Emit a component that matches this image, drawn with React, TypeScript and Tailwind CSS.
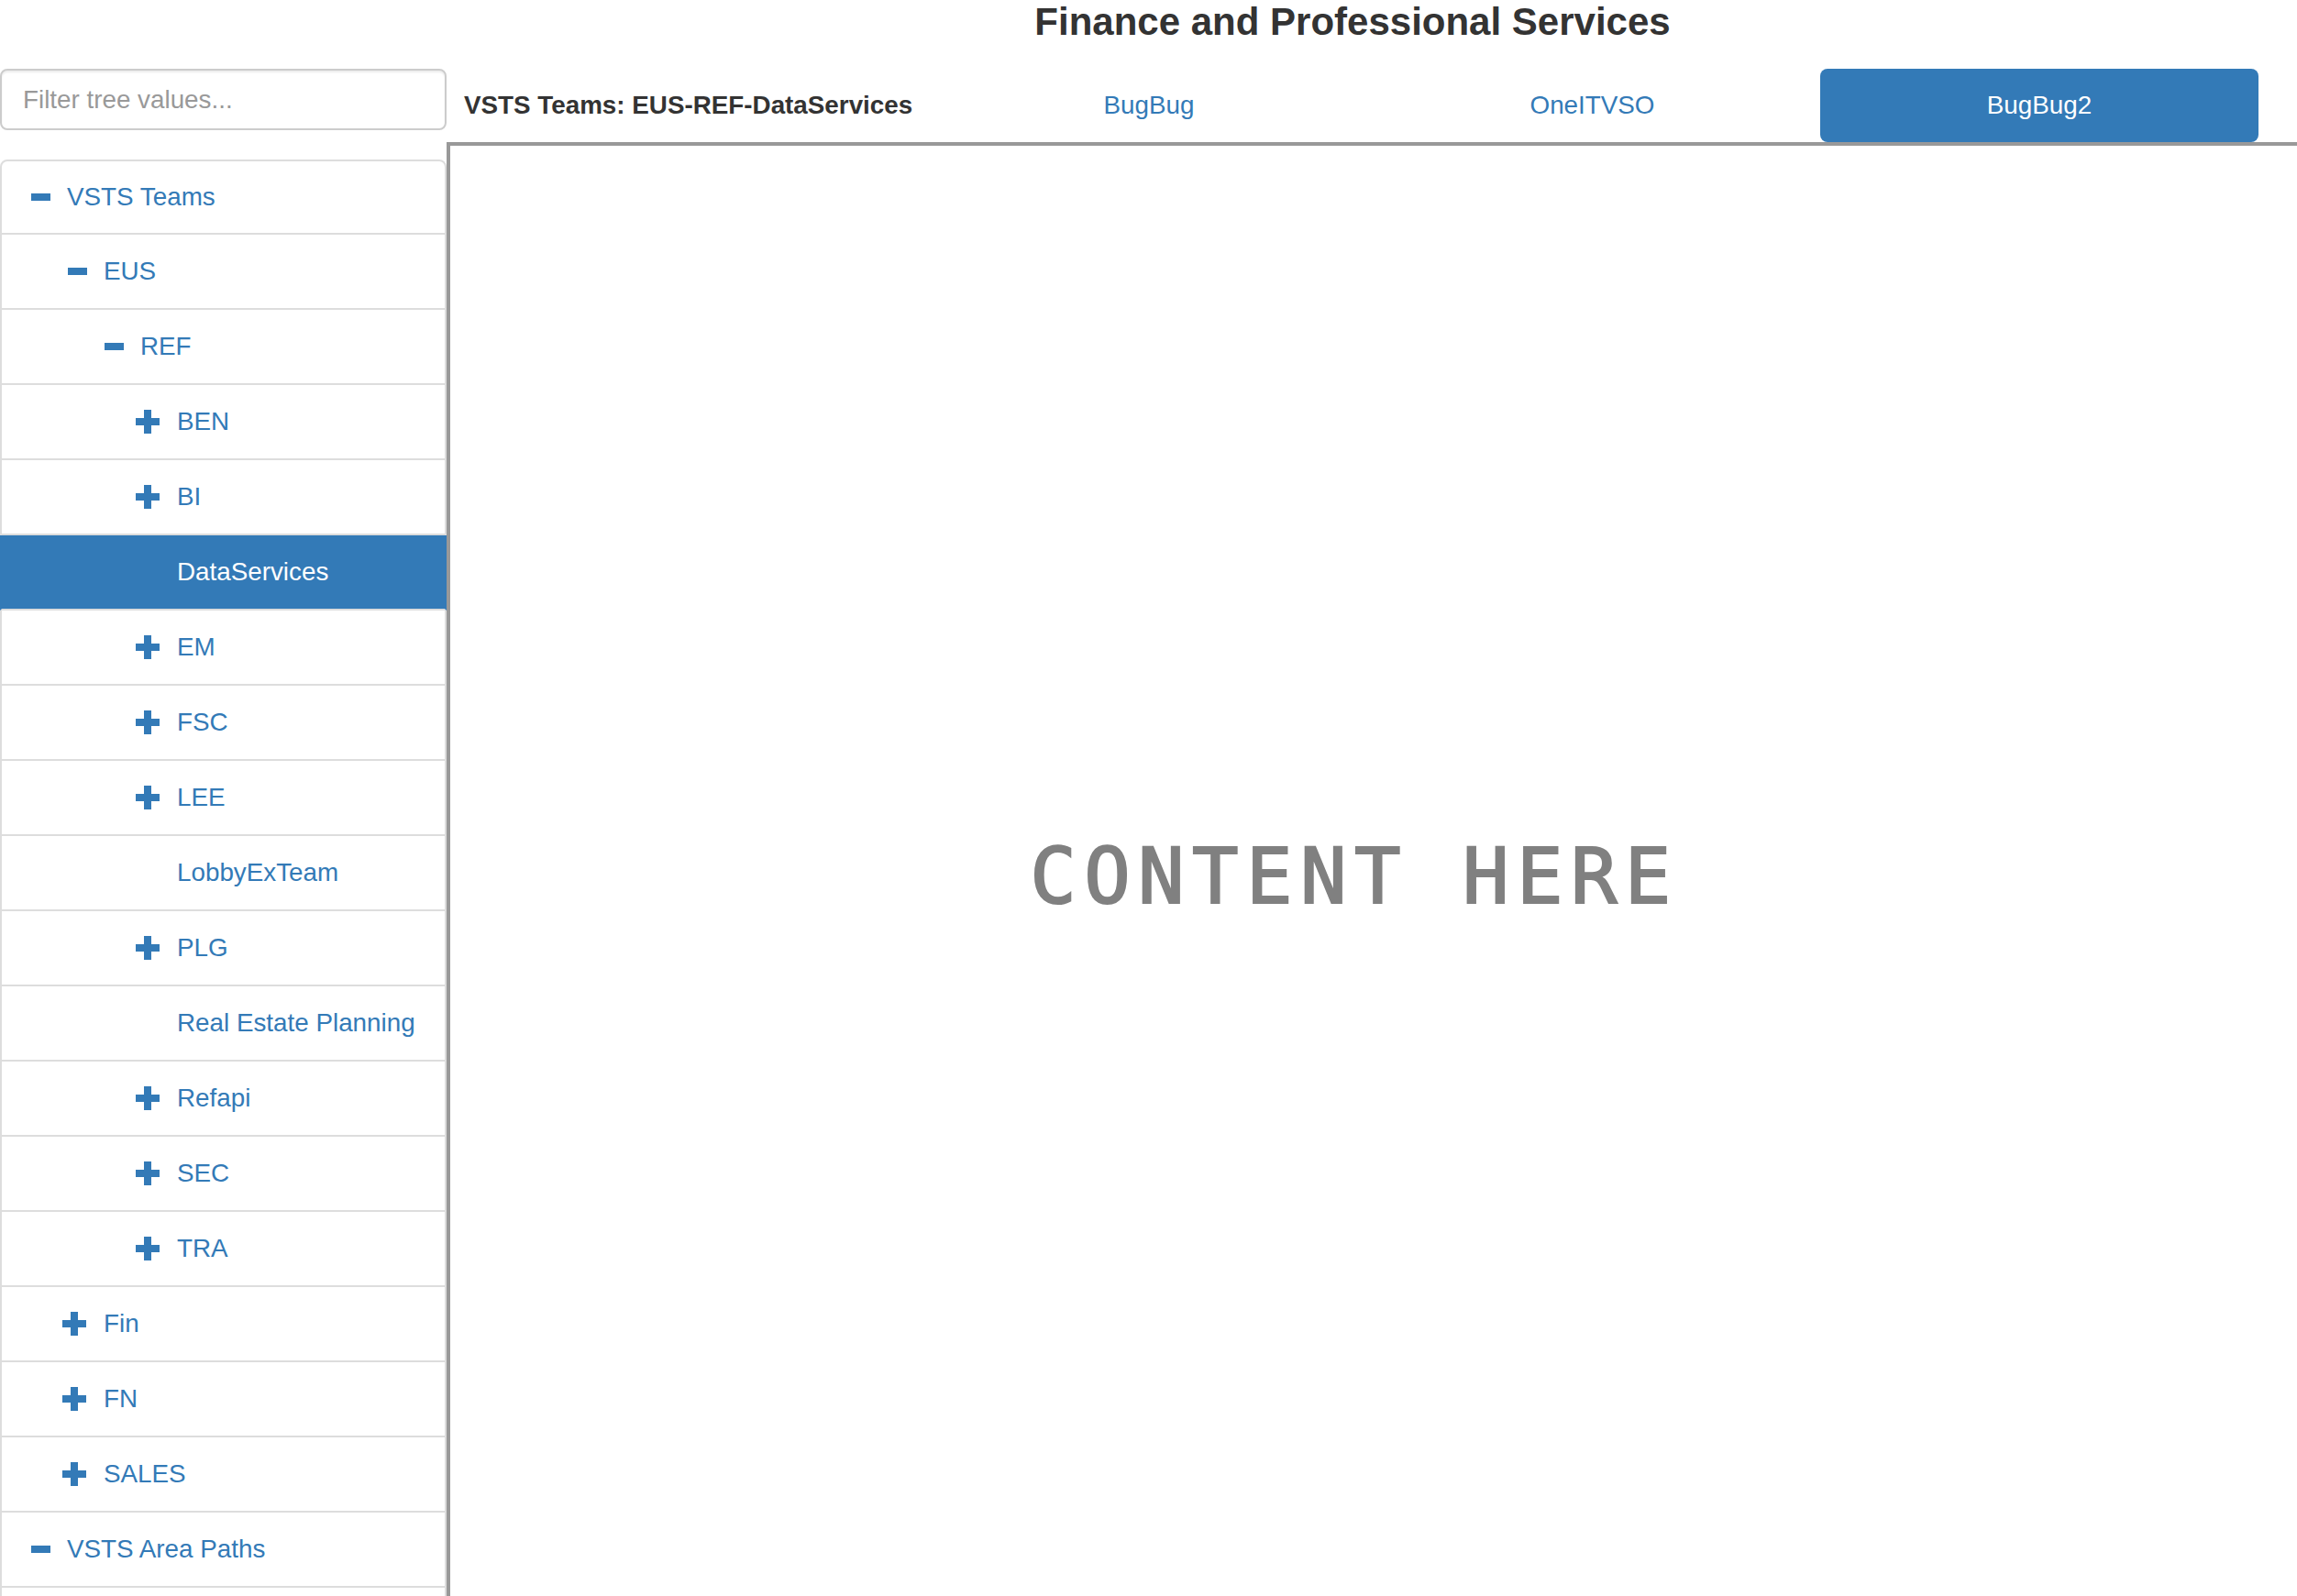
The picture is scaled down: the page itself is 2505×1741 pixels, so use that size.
import React from 'react';

type Node = { level: number; icon?: 'plus' | 'minus'; label: string; selected?: boolean };

const tree: Node[] = [
  { level: 0, icon: 'minus', label: 'VSTS Teams' },
  { level: 1, icon: 'minus', label: 'EUS' },
  { level: 2, icon: 'minus', label: 'REF' },
  { level: 3, icon: 'plus', label: 'BEN' },
  { level: 3, icon: 'plus', label: 'BI' },
  { level: 3, label: 'DataServices', selected: true },
  { level: 3, icon: 'plus', label: 'EM' },
  { level: 3, icon: 'plus', label: 'FSC' },
  { level: 3, icon: 'plus', label: 'LEE' },
  { level: 3, label: 'LobbyExTeam' },
  { level: 3, icon: 'plus', label: 'PLG' },
  { level: 3, label: 'Real Estate Planning' },
  { level: 3, icon: 'plus', label: 'Refapi' },
  { level: 3, icon: 'plus', label: 'SEC' },
  { level: 3, icon: 'plus', label: 'TRA' },
  { level: 1, icon: 'plus', label: 'Fin' },
  { level: 1, icon: 'plus', label: 'FN' },
  { level: 1, icon: 'plus', label: 'SALES' },
  { level: 0, icon: 'minus', label: 'VSTS Area Paths' },
  // next row starts just past the bottom of the window
  { level: 1, label: '' },
];

const indent: Record<number, string> = {
  0: 'pl-[26px]',
  1: 'pl-[66px]',
  2: 'pl-[106px]',
  3: 'pl-[146px]',
};

const TreeIcon = ({ kind, color }: { kind?: 'plus' | 'minus'; color: string }) => (
  <svg width="27" height="26" viewBox="0 0 27 26" className="shrink-0 mr-[18px]">
    {kind === 'plus' && <path d="M9 0h8v9h9v8h-9v9h-8v-9H0v-8h9z" fill={color} />}
    {kind === 'minus' && <rect x="6" y="9" width="21" height="8" fill={color} />}
  </svg>
);

const tabs = [
  { label: 'BugBug', cls: 'w-[480px]' },
  { label: 'OneITVSO', cls: 'ml-[2px] w-[483px]' },
  { label: 'BugBug2', cls: 'ml-[7px] w-[478px]', active: true },
];

export default function App() {
  return (
    <div className="flex h-[1741px] overflow-hidden bg-white font-['Liberation_Sans',Arial,sans-serif]">
      {/* tree sidebar */}
      <div className="w-[487px] shrink-0 pt-[75px]">
        <input
          placeholder="Filter tree values..."
          className="block h-[67px] w-[487px] rounded-[8px] border-2 border-[#ccc] pl-[23px] text-[27.8px] text-[#555] shadow-[inset_0_2px_2px_rgba(0,0,0,0.075)] outline-none placeholder:text-[#999]"
        />
        <ul className="mt-[32px]">
          {tree.map((n, i) => (
            <li
              key={i}
              className={`flex h-[82px] items-center border-x-2 border-b-2 ${indent[n.level]} ${
                i === 0 ? 'rounded-t-[8px] border-t-2' : ''
              } ${n.selected ? 'border-x-[#337ab7] border-b-[#ddd] border-t-[#ddd] bg-[#337ab7] text-white' : 'border-[#ddd] text-[#337ab7]'}`}
            >
              <TreeIcon kind={n.icon} color="#337ab7" />
              <span className="text-[27.8px] leading-none">{n.label}</span>
            </li>
          ))}
        </ul>
      </div>

      {/* main column */}
      <div className="flex min-w-0 flex-1 flex-col">
        <div className="w-[1976px]">
          <h1 className="text-center text-[42px] font-bold leading-[48px] text-[#333]">
            Finance and Professional Services
          </h1>
          <div className="mt-[27px] flex h-[80px] items-center">
            <div className="w-[526px] pl-[19px] text-[27.8px] font-bold text-[#333]">
              VSTS Teams: EUS-REF-DataServices
            </div>
            {tabs.map((t) => (
              <div
                key={t.label}
                className={`flex h-[80px] items-center justify-center rounded-[8px] text-[27.8px] ${t.cls} ${
                  t.active ? 'bg-[#337ab7] text-white' : 'text-[#337ab7]'
                }`}
              >
                {t.label}
              </div>
            ))}
          </div>
        </div>
        <div className="flex flex-1 items-center justify-center border-l-4 border-t-4 border-[#999] pr-[42px] pt-[12px]">
          <span className="font-['DejaVu_Sans_Mono',monospace] text-[84px] tracking-[8.4px] text-[#808080] [-webkit-text-stroke:2px_#808080]">
            CONTENT HERE
          </span>
        </div>
      </div>
    </div>
  );
}
